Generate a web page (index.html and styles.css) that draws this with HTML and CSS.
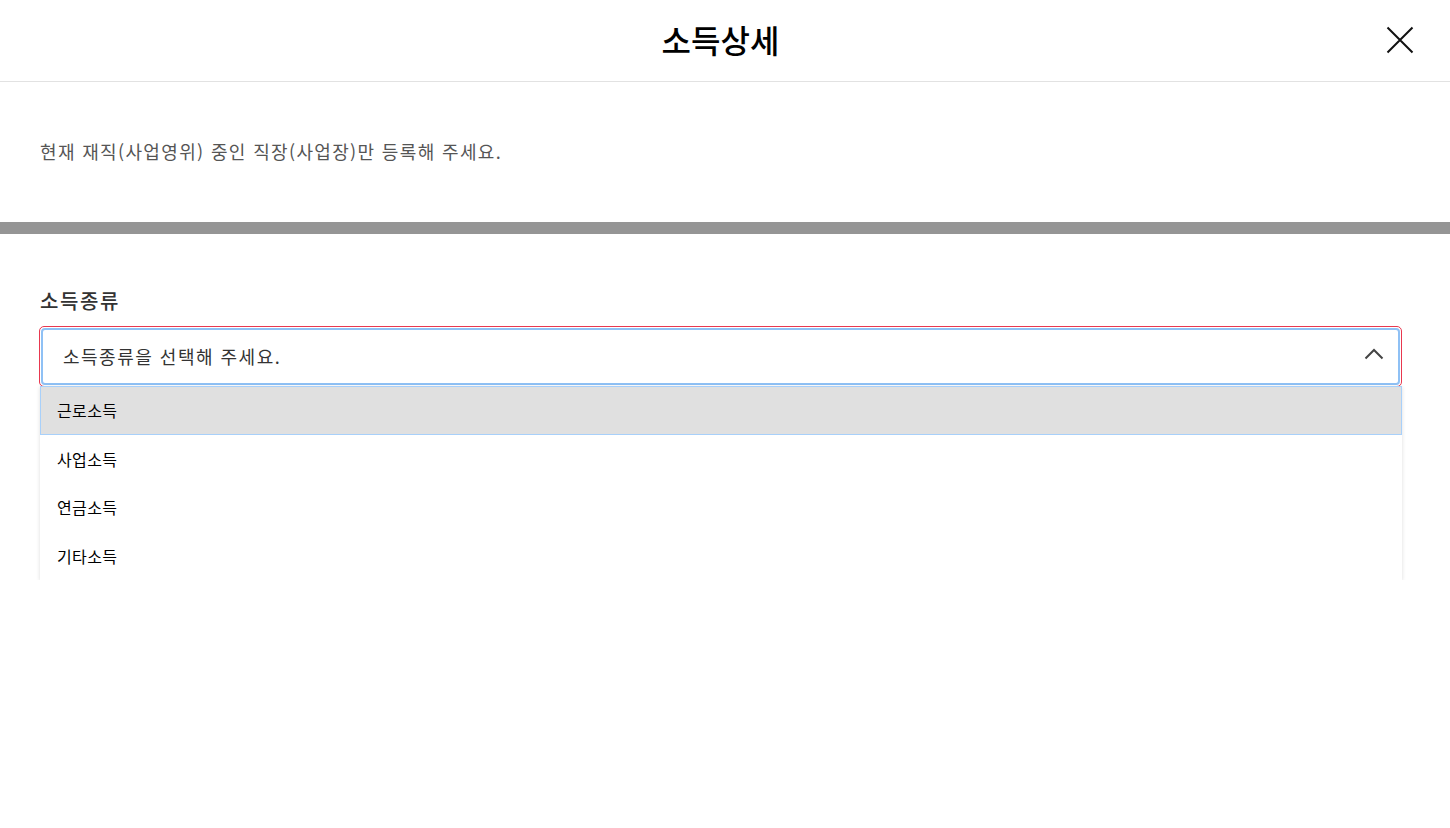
FILE: index.html
```html
<!DOCTYPE html>
<html lang="ko">
<head>
<meta charset="utf-8">
<title>소득상세</title>
<link rel="stylesheet" href="styles.css">
</head>
<body>
<header class="header">
  <h1 class="title">소득상세</h1>
  <button class="close" aria-label="닫기">
    <svg width="28" height="28" viewBox="0 0 28 28"><path d="M1.5 1.5 L26.5 26.5 M26.5 1.5 L1.5 26.5" stroke="#111" stroke-width="2" fill="none"/></svg>
  </button>
</header>
<section class="notice">현재 재직(사업영위) 중인 직장(사업장)만 등록해 주세요.</section>
<div class="divider"></div>
<section class="form">
  <div class="label">소득종류</div>
  <div class="select-wrap">
    <div class="select">
      <span class="placeholder">소득종류을 선택해 주세요.</span>
      <svg class="chev" width="20" height="12" viewBox="0 0 20 12"><path d="M1.5 10.5 L10 2 L18.5 10.5" stroke="#444" stroke-width="2" fill="none"/></svg>
    </div>
  </div>
  <ul class="list">
    <li class="item active">근로소득</li>
    <li class="item">사업소득</li>
    <li class="item">연금소득</li>
    <li class="item">기타소득</li>
  </ul>
</section>
</body>
</html>
```
FILE: styles.css
```css
* { box-sizing: border-box; }
body {
  margin: 0;
  background: #fff;
  font-family: "Noto Sans CJK KR", "Noto Sans", sans-serif;
  color: #000;
}
.header {
  height: 82px;
  border-bottom: 1px solid #e2e2e2;
  display: flex;
  align-items: center;
  justify-content: center;
  position: relative;
}
.title {
  margin: -4px 9px 0 0;
  font-size: 32px;
  font-weight: 500;
  color: #000;
  line-height: 1;
}
.close {
  position: absolute;
  right: 36px;
  top: 26px;
  width: 28px;
  height: 28px;
  padding: 0;
  border: 0;
  background: none;
}
.close svg { display: block; }
.notice {
  height: 140px;
  padding: 56px 40px 0;
  font-size: 18px;
  letter-spacing: 1.35px;
  color: #555;
  line-height: 26px;
}
.divider {
  height: 12px;
  background: #959595;
}
.form {
  padding: 52px 48px 0 39px;
}
.label {
  font-size: 20px;
  font-weight: 500;
  letter-spacing: 1.6px;
  color: #333;
  line-height: 30px;
  padding-left: 1px;
  margin-bottom: 10px;
}
.select-wrap {
  border: 1px solid #e8384f;
  border-radius: 5px;
  padding: 1px;
}
.select {
  height: 57px;
  border: 2px solid #8fc1f5;
  border-radius: 4px;
  display: flex;
  align-items: center;
  justify-content: space-between;
  padding: 0 14px 0 20px;
}
.placeholder {
  font-size: 18px;
  letter-spacing: 1.5px;
  color: #333;
  margin-top: -2px;
}
.chev { display: block; margin-top: -6px; }
.list {
  list-style: none;
  margin: -1px 0 0 1px;
  padding: 0;
  background: #fff;
  box-shadow: 0 1px 4px rgba(0,0,0,0.14);
}
.item {
  height: 48.5px;
  display: flex;
  align-items: center;
  padding-left: 17px;
  font-size: 16px;
  letter-spacing: 0.4px;
  color: #000;
}
.item.active {
  background: #e0e0e0;
  border: 1px solid #a8d0fa;
  padding-left: 16px;
}
```
